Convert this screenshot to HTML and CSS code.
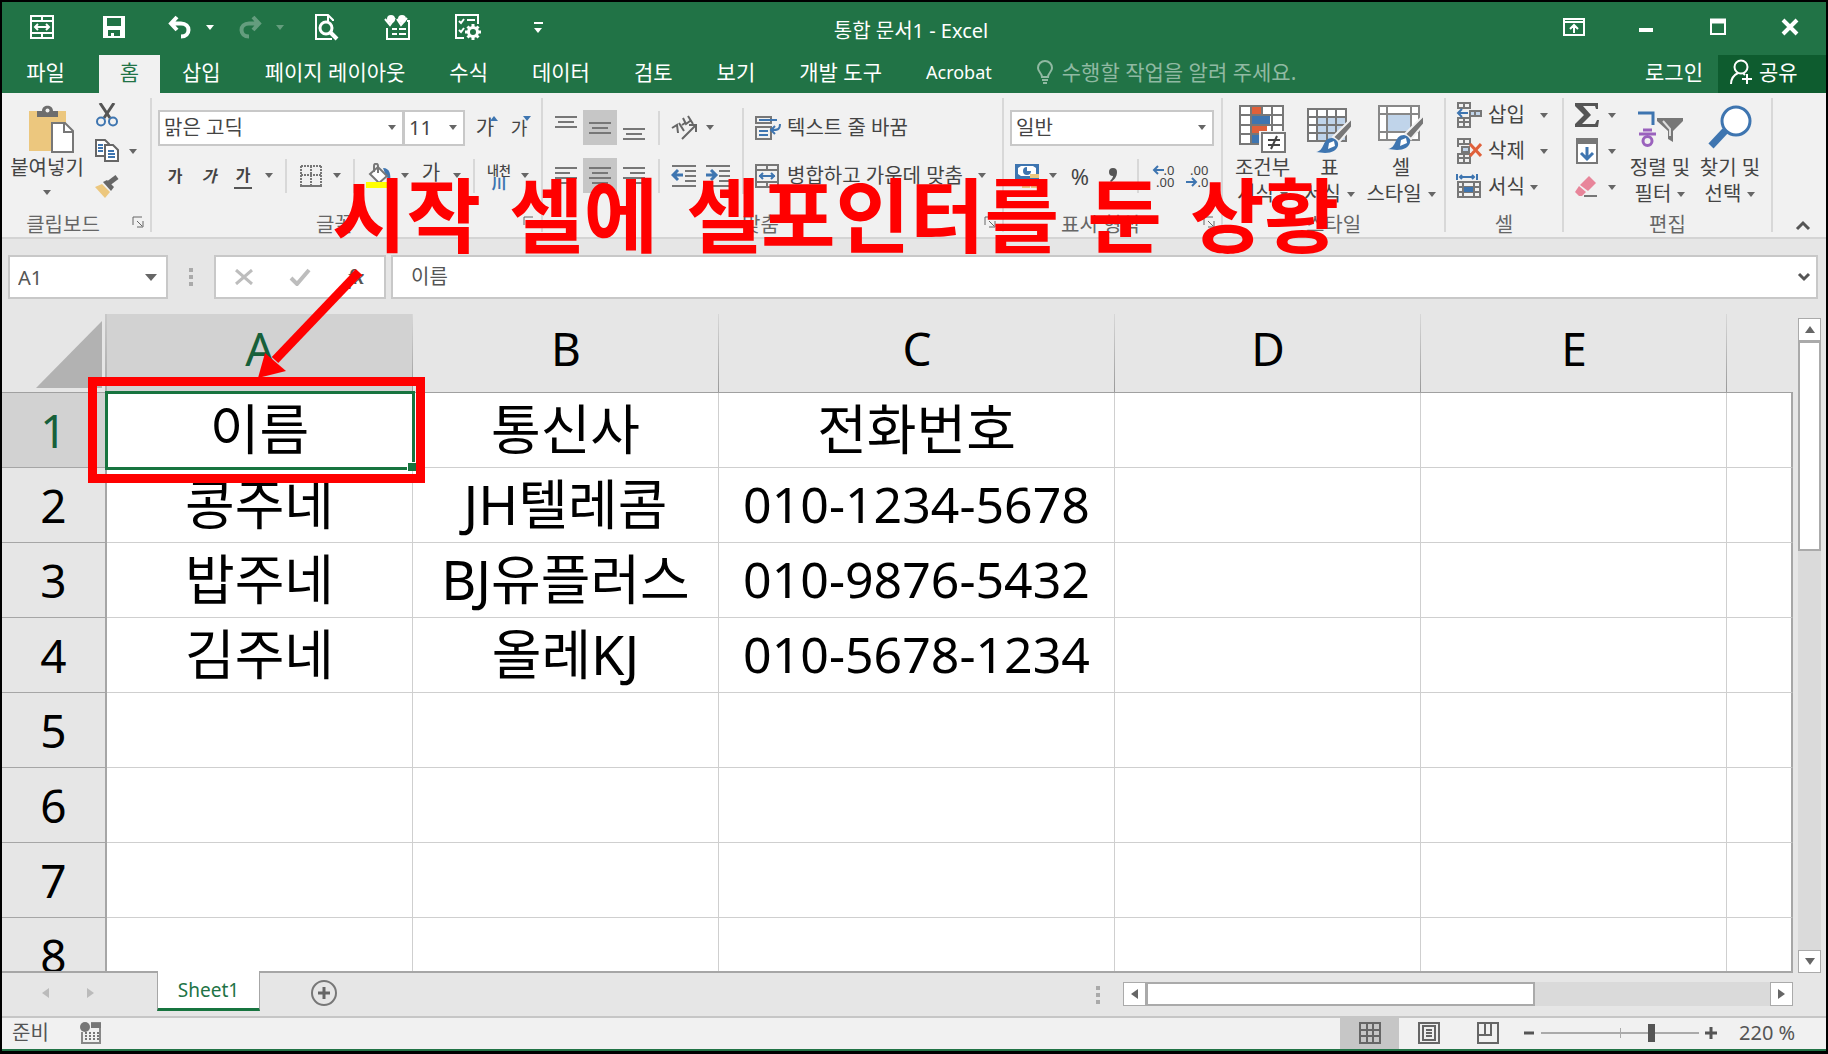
FILE: index.html
```html
<!DOCTYPE html>
<html lang="ko">
<head>
<meta charset="utf-8">
<title>통합 문서1 - Excel</title>
<link rel="stylesheet" href="styles.css">
</head>
<body>
<div class="window">
  <header class="titlebar">
    <div class="quick">
      <button class="q q-merge" aria-label="병합"><svg width="26" height="26" viewBox="0 0 26 26" fill="none" stroke="#fff" stroke-width="2"><path d="M2 2h22v22H2zM2 7h22M2 19h22M13 2v5M13 19v5M6 13h14M9 10l-3 3 3 3M17 10l3 3-3 3"/></svg></button>
      <button class="q q-save" aria-label="저장"><svg width="24" height="24" viewBox="0 0 24 24" fill="#fff"><path fill-rule="evenodd" d="M1 1h22v22H1zM5 3v8h14V3zM6 15v6h3v-3h3v3h6v-6z"/></svg></button>
      <button class="q q-undo" aria-label="실행 취소"><svg width="24" height="24" viewBox="0 0 24 24" fill="none" stroke="#fff" stroke-width="4"><path d="M9 2L3 8.500l6 6.500M4 8.500h9c10 0 10 13 0 13"/></svg></button>
      <button class="q q-drop" aria-label="실행 취소 목록"><i class="caret"></i></button>
      <button class="q q-undo dim" aria-label="다시 실행"><svg width="24" height="24" viewBox="0 0 24 24" fill="none" stroke="#fff" stroke-width="4"><path d="M15 2l6 6.500-6 6.500M20 8.500h-9c-10 0-10 13 0 13"/></svg></button>
      <button class="q q-drop dim" aria-label="다시 실행 목록"><i class="caret"></i></button>
      <button class="q q-wide" aria-label="인쇄 미리 보기"><svg width="26" height="28" viewBox="0 0 26 28" fill="none" stroke="#fff" stroke-width="2"><path d="M20 8v-1l-5-5H3v24h16M15 2v6"/><circle cx="13" cy="15" r="6" stroke-width="3"/><path d="M17 19l7 7" stroke-width="4"/></svg></button>
      <button class="q q-wide" aria-label="일정"><svg width="28" height="26" viewBox="0 0 28 26" fill="none" stroke="#fff" stroke-width="2"><path d="M24 7h2v18H4V14M9 15h5M16 15h7M9 20h5M16 20h7"/><circle cx="8" cy="5" r="4" fill="#fff" stroke="none"/><circle cx="19" cy="5" r="4" fill="#fff" stroke="none"/><path d="M2 5l5 6 5-7M14 5l4 6 6-7"/></svg></button>
      <button class="q q-wide" aria-label="양식"><svg width="28" height="28" viewBox="0 0 28 28" fill="none" stroke="#fff" stroke-width="2"><path d="M24 11V2H2v23h8M5 8l2 2 3-4M13 7h8M5 17l2 2 3-4"/><circle cx="19" cy="19" r="4.500" stroke-width="3"/><path d="M19 11v4M19 23v4M11 19h4M23 19h4M13.500 13.500l2 2M22.500 22.500l2 2M24.500 13.500l-2 2M15.500 22.500l-2 2" stroke-width="3"/></svg></button>
      <button class="q q-more" aria-label="빠른 실행 도구 모음 사용자 지정"><i class="bar"></i><i class="caret"></i></button>
    </div>
    <h1>통합 문서1 - Excel</h1>
    <div class="controls">
      <button aria-label="리본 메뉴 표시 옵션"><svg width="22" height="18" viewBox="0 0 22 18" fill="none" stroke="#fff" stroke-width="2"><path d="M1 1h20v16H1zM1 4h20M11 15V8M7 11l4-4 4 4"/></svg></button>
      <button aria-label="최소화"><svg width="16" height="18" viewBox="0 0 16 18"><path d="M1 12h14" stroke="#fff" stroke-width="4"/></svg></button>
      <button aria-label="최대화"><svg width="16" height="18" viewBox="0 0 16 18" fill="none" stroke="#fff"><path d="M1 1v15h14V1" stroke-width="2"/><path d="M0 3h16" stroke-width="5"/></svg></button>
      <button aria-label="닫기"><svg width="18" height="18" viewBox="0 0 18 18"><path d="M2 2l14 14M16 2L2 16" stroke="#fff" stroke-width="4"/></svg></button>
    </div>
  </header>

  <nav class="tabs">
    <button class="tab file">파일</button>
    <button class="tab active">홈</button>
    <button class="tab">삽입</button>
    <button class="tab">페이지 레이아웃</button>
    <button class="tab">수식</button>
    <button class="tab">데이터</button>
    <button class="tab">검토</button>
    <button class="tab">보기</button>
    <button class="tab">개발 도구</button>
    <button class="tab latin">Acrobat</button>
    <button class="tab tell"><svg width="18" height="24" viewBox="0 0 18 24" fill="none" stroke="currentColor" stroke-width="2"><path d="M6 17c0-4-4-5-4-9a7 7 0 0 1 14 0c0 4-4 5-4 9zM6 20h6M7 23h4"/></svg>수행할 작업을 알려 주세요.</button>
    <button class="tab login">로그인</button>
    <button class="tab share"><svg width="24" height="26" viewBox="0 0 24 26" fill="none" stroke="#fff" stroke-width="2"><circle cx="12" cy="8" r="6.500"/><path d="M2 25c0-6 3-9 7-11M14 14l2 2M18 15v10M13 20h10"/></svg>공유</button>
  </nav>

  <section class="ribbon">
    <div class="group g-clip">
      <div class="body">
        <button class="big"><svg width="46" height="48" viewBox="0 0 46 48"><path d="M1 6h37v40H1z" fill="#ecc77e"/><path d="M9 12V6h5c0-7 11-7 11 0h5v6z" fill="#6d6d6d"/><circle cx="19.500" cy="5.500" r="2" fill="#f1f1f1"/><path d="M24 18h13l8 8v21H24z" fill="#fff" stroke="#777" stroke-width="2"/><path d="M36 18v9h9" fill="none" stroke="#777" stroke-width="2"/></svg><span>붙여넣기</span><i class="caret low"></i></button>
        <div class="stack">
          <div class="row"><button class="tool" aria-label="잘라내기"><svg width="24" height="24" viewBox="0 0 24 24" fill="none"><path d="M5 0l10 15M19 0L9 15" stroke="#555" stroke-width="3"/><circle cx="6" cy="18.500" r="4" stroke="#3e75b0" stroke-width="2"/><circle cx="18" cy="18.500" r="4" stroke="#3e75b0" stroke-width="2"/></svg></button></div>
          <div class="row"><button class="tool" aria-label="복사"><svg width="26" height="24" viewBox="0 0 26 24" fill="#fff" stroke="#666" stroke-width="2"><path d="M2 1h9l4 4v12H2z"/><path d="M11 6h8l5 5v11H11z"/><path d="M4 6h5M4 9h5M4 12h5M14 12h6M14 15h7M14 18h7" stroke="#3e75b0"/></svg></button><button class="drop" aria-label="복사 옵션"><i class="caret"></i></button></div>
          <div class="row"><button class="tool" aria-label="서식 복사"><svg width="26" height="24" viewBox="0 0 26 24"><path d="M1 12l7-3 8 8-5 6z" fill="#ecc77e"/><path d="M9 7l4-2 7 7-3 4z" fill="#666"/><path d="M15 8l8-6" stroke="#666" stroke-width="5"/></svg></button></div>
        </div>
      </div>
      <footer><span>클립보드</span><button class="launch" aria-label="클립보드 옵션"><svg width="12" height="12" viewBox="0 0 12 12" fill="none" stroke="#666"><path d="M1 9V1h9M5 5l5 5M11 5v6H5"/></svg></button></footer>
    </div>

    <div class="group g-font">
      <div class="body rows">
        <div class="row">
          <label class="combo face"><select aria-label="글꼴"><option>맑은 고딕</option></select><i class="caret"></i></label>
          <label class="combo size"><select aria-label="글꼴 크기"><option>11</option></select><i class="caret"></i></label>
          <button class="tool glyph grow" aria-label="글꼴 크기 크게">가<i class="up"></i></button>
          <button class="tool glyph shrink" aria-label="글꼴 크기 작게">가<i class="down"></i></button>
        </div>
        <div class="row">
          <button class="tool fmt">가</button>
          <button class="tool fmt it">가</button>
          <button class="tool fmt un">가</button>
          <button class="drop" aria-label="밑줄 옵션"><i class="caret"></i></button>
          <i class="div"></i>
          <button class="tool" aria-label="테두리"><svg width="22" height="22" viewBox="0 0 22 22" fill="none" stroke="#777" stroke-width="2"><path d="M1 1h20M1 10h20M1 1v19M11 1v19M21 1v19" stroke-dasharray="2 1"/><path d="M0 21h22"/></svg></button>
          <button class="drop" aria-label="테두리 옵션"><i class="caret"></i></button>
          <i class="div"></i>
          <button class="tool" aria-label="채우기 색"><svg width="26" height="26" viewBox="0 0 26 26"><path d="M17 5c7 0 8 7 7 13l-4-5z" fill="#3e75b0"/><path d="M4 11l8-7 9 9-8 7z" fill="#fff" stroke="#777" stroke-width="2"/><path d="M8 9V3c0-3 4-3 4 0v7" fill="none" stroke="#777" stroke-width="2"/><path d="M0 19h25v6H0z" fill="#ff0"/></svg></button>
          <button class="drop" aria-label="채우기 옵션"><i class="caret"></i></button>
          <button class="tool glyph color">가</button>
          <button class="drop" aria-label="글꼴 색 옵션"><i class="caret"></i></button>
          <i class="div"></i>
          <button class="tool ruby"><span>내천</span><b>川</b></button>
          <button class="drop" aria-label="윗주 옵션"><i class="caret"></i></button>
        </div>
      </div>
      <footer><span>글꼴</span><button class="launch" aria-label="글꼴 옵션"><svg width="12" height="12" viewBox="0 0 12 12" fill="none" stroke="#666"><path d="M1 9V1h9M5 5l5 5M11 5v6H5"/></svg></button></footer>
    </div>

    <div class="group g-align">
      <div class="body">
        <div class="rows">
          <div class="row">
            <button class="tool" aria-label="위쪽 맞춤"><svg width="22" height="28" viewBox="0 0 22 28" stroke="#777" stroke-width="2"><path d="M0 3h22M3 8h16M0 13h22"/></svg></button>
            <button class="tool on" aria-label="가운데 맞춤"><svg width="22" height="28" viewBox="0 0 22 28" stroke="#777" stroke-width="2"><path d="M0 9h22M3 14h16M0 19h22"/></svg></button>
            <button class="tool" aria-label="아래쪽 맞춤"><svg width="22" height="28" viewBox="0 0 22 28" stroke="#777" stroke-width="2"><path d="M0 15h22M3 20h16M0 25h22"/></svg></button>
            <i class="div"></i>
            <button class="tool" aria-label="방향"><svg width="26" height="26" viewBox="0 0 26 26" fill="none" stroke="#666" stroke-width="2"><path d="M11 24L25 10M18 10h7v7M1 13l5-3 1 8M8 8l5 8M11 10l3-2M12 3l3 6 4-3M17 1l5 8"/></svg></button>
            <button class="drop" aria-label="방향 옵션"><i class="caret"></i></button>
          </div>
          <div class="row">
            <button class="tool" aria-label="왼쪽 맞춤"><svg width="22" height="24" viewBox="0 0 22 24" stroke="#777" stroke-width="2"><path d="M0 4h22M0 9h15M0 14h22M0 19h15"/></svg></button>
            <button class="tool on" aria-label="가로 가운데 맞춤"><svg width="22" height="24" viewBox="0 0 22 24" stroke="#777" stroke-width="2"><path d="M0 4h22M3 9h16M0 14h22M3 19h16"/></svg></button>
            <button class="tool" aria-label="오른쪽 맞춤"><svg width="22" height="24" viewBox="0 0 22 24" stroke="#777" stroke-width="2"><path d="M0 4h22M7 9h15M0 14h22M7 19h15"/></svg></button>
            <i class="div"></i>
            <button class="tool" aria-label="내어쓰기"><svg width="26" height="24" viewBox="0 0 26 24" stroke="#777" stroke-width="2"><path d="M1 2h24M14 7h11M14 12h11M14 17h11M1 22h24"/><path d="M12 11H3M7 6l-5 5 5 5" fill="none" stroke="#3e75b0" stroke-width="3"/></svg></button>
            <button class="tool" aria-label="들여쓰기"><svg width="26" height="24" viewBox="0 0 26 24" stroke="#777" stroke-width="2"><path d="M1 2h24M14 7h11M14 12h11M14 17h11M1 22h24"/><path d="M1 11h9M6 6l5 5-5 5" fill="none" stroke="#3e75b0" stroke-width="3"/></svg></button>
          </div>
        </div>
        <i class="div tall"></i>
        <div class="rows">
          <div class="row">
            <button class="wide"><svg width="26" height="24" viewBox="0 0 26 24" fill="none" stroke="#777" stroke-width="2"><path d="M1 1h15v6H1zM1 11h15v12H1z"/><path d="M4 4h18M4 15h9M4 19h9M25 8c0 6-3 6-8 6M20 10l-4 4 4 4" stroke="#3e75b0"/></svg>텍스트 줄 바꿈</button>
          </div>
          <div class="row">
            <button class="wide"><svg width="26" height="24" viewBox="0 0 26 24" fill="none" stroke="#777" stroke-width="2"><path d="M1 1h22v22H1zM1 6h22M1 18h22M12 1v5M12 18v5"/><path d="M4 12h16M8 9l-3 3 3 3M16 9l3 3-3 3" stroke="#3e75b0"/></svg>병합하고 가운데 맞춤</button><button class="drop far" aria-label="병합 옵션"><i class="caret"></i></button>
          </div>
        </div>
      </div>
      <footer><span>맞춤</span><button class="launch" aria-label="맞춤 옵션"><svg width="12" height="12" viewBox="0 0 12 12" fill="none" stroke="#666"><path d="M1 9V1h9M5 5l5 5M11 5v6H5"/></svg></button></footer>
    </div>

    <div class="group g-number">
      <div class="body rows">
        <div class="row"><label class="combo kind"><select aria-label="표시 형식"><option>일반</option></select><i class="caret"></i></label></div>
        <div class="row">
          <button class="tool" aria-label="회계 표시 형식"><svg width="26" height="26" viewBox="0 0 26 26"><path d="M1 1h24v15H1z" fill="#3e75b0"/><path d="M4 5l3-2h12l3 2v6l-3 2H7l-3-2z" fill="#fff"/><path d="M17 8a4 4 0 1 1-4-4v4z" fill="#3e75b0"/><path d="M16 11h9v4h-9zM15 16h9v4h-9zM8 20h8v5H8zM17 21h8v4h-8z" fill="#ecc77e"/></svg></button>
          <button class="drop" aria-label="회계 옵션"><i class="caret"></i></button>
          <button class="tool pct">%</button>
          <button class="tool comma" aria-label="쉼표 스타일"><svg width="10" height="16" viewBox="0 0 10 16"><path d="M5 1a4 4 0 0 1 4 4c0 5-3 8-6 10l-1-1c2-2 3-4 3-5a4 4 0 0 1 0-8z" fill="#555"/></svg></button>
          <i class="div"></i>
          <button class="tool dec" aria-label="자릿수 늘림"><span><svg width="12" height="10" viewBox="0 0 12 10" fill="none" stroke="#3e75b0" stroke-width="2"><path d="M12 5H2M6 1L2 5l4 4"/></svg>.0</span><span>.00</span></button>
          <button class="tool dec" aria-label="자릿수 줄임"><span>.00</span><span><svg width="12" height="10" viewBox="0 0 12 10" fill="none" stroke="#3e75b0" stroke-width="2"><path d="M0 5h10M6 1l4 4-4 4"/></svg>.0</span></button>
        </div>
      </div>
      <footer><span>표시 형식</span><button class="launch" aria-label="표시 형식 옵션"><svg width="12" height="12" viewBox="0 0 12 12" fill="none" stroke="#666"><path d="M1 9V1h9M5 5l5 5M11 5v6H5"/></svg></button></footer>
    </div>

    <div class="group g-style">
      <div class="body">
        <button class="big"><svg width="48" height="48" viewBox="0 0 48 48"><path d="M1 1h43v38H1z" fill="#fff"/><path d="M13 1h10v9H13zM13 20h15v9H13z" fill="#e0603a"/><path d="M13 11h18v9H13zM13 30h9v9h-9z" fill="#3e75b0"/><path d="M1 1h43v38H1zM1 10h43M1 20h43M1 29h43M12 1v38M23 1v10M33 1v38" fill="none" stroke="#777" stroke-width="2"/><path d="M20 26h28v22H20z" fill="#f1f1f1"/><path d="M23 28h23v19H23z" fill="#fff" stroke="#777" stroke-width="2"/><path d="M29 35h12M29 40h12M38 31l-6 13" stroke="#444" stroke-width="2"/></svg><span>조건부</span><span>서식<i class="caret"></i></span></button>
        <button class="big"><svg width="48" height="48" viewBox="0 0 48 48"><path d="M2 4h38v32H2z" fill="#fff"/><path d="M11 13h29v23H11z" fill="#c0d4ea"/><path d="M2 4h38v32H2zM2 12h38M2 20h38M2 28h38M11 4v32M21 4v32M30 4v32" fill="none" stroke="#777" stroke-width="2"/><path d="M46 13v9L33 37l-6-5z" fill="#777" stroke="#f1f1f1" stroke-width="2"/><path d="M10 47c9-1 6-14 16-14 10 2 8 15-7 15z" fill="#3e75b0"/><path d="M22 44l7-3-1-5-5 2z" fill="#fff"/></svg><span>표</span><span>서식<i class="caret"></i></span></button>
        <button class="big last"><svg width="48" height="48" viewBox="0 0 48 48"><path d="M2 1h40v34H2z" fill="#fff"/><path d="M2 1h40v34H2zM2 9h40M2 27h40M10 1v34M34 1v34" fill="none" stroke="#888" stroke-width="2"/><path d="M11 10h22v16H11z" fill="#c0d4ea"/><path d="M47 10v9L34 34l-6-5z" fill="#777" stroke="#f1f1f1" stroke-width="2"/><path d="M11 44c9-1 6-14 16-14 10 2 8 15-7 15z" fill="#3e75b0"/><path d="M23 41l7-3-1-5-5 2z" fill="#fff"/></svg><span>셀</span><span>스타일<i class="caret"></i></span></button>
      </div>
      <footer><span>스타일</span></footer>
    </div>

    <div class="group g-cell">
      <div class="body stack">
        <div class="row"><button class="wide"><svg width="26" height="26" viewBox="0 0 26 26" fill="none" stroke="#777" stroke-width="2"><path d="M2 1h12v5H2zM8 1v5M2 16h12v9H2zM8 16v9M2 20h12"/><path d="M14 9h11v5H14z" fill="#c0d4ea"/><path d="M19 9v5"/><path d="M12 11H2M6 7l-4 4 4 4" stroke="#3e75b0"/></svg>삽입</button><button class="drop far" aria-label="삽입 옵션"><i class="caret"></i></button></div>
        <div class="row"><button class="wide"><svg width="26" height="26" viewBox="0 0 26 26" fill="none" stroke="#777" stroke-width="2"><path d="M2 1h12v5H2zM8 1v5M2 16h12v9H2zM8 16v9M2 20h12M2 6v3"/><path d="M6 9h7v5H6z" fill="#c0d4ea"/><path d="M14 6l11 12M25 6L14 18" stroke="#e0603a" stroke-width="3"/></svg>삭제</button><button class="drop far" aria-label="삭제 옵션"><i class="caret"></i></button></div>
        <div class="row"><button class="wide"><svg width="26" height="26" viewBox="0 0 26 26" fill="none" stroke="#777" stroke-width="2"><path d="M2 8h22v15H2zM2 13h22M2 18h22M7 8v15M18 8v15"/><path d="M8 13h9v5H8z" fill="#3e75b0" stroke="none"/><path d="M1 0v6M21 0v6M4 3h14M6 1L4 3l2 2M16 1l2 2-2 2" stroke="#3e75b0"/></svg>서식</button><button class="drop" aria-label="서식 옵션"><i class="caret"></i></button></div>
      </div>
      <footer><span>셀</span></footer>
    </div>

    <div class="group g-edit">
      <div class="body">
        <div class="stack">
          <div class="row"><button class="tool" aria-label="자동 합계"><svg width="24" height="24" viewBox="0 0 24 24"><path d="M0 0h23v6h-2l-1-3H8l8 9-9 9h13l2-4h2l-1 7H0v-3l9-9-9-9z" fill="#555"/></svg></button><button class="drop" aria-label="합계 옵션"><i class="caret"></i></button></div>
          <div class="row"><button class="tool" aria-label="채우기"><svg width="22" height="26" viewBox="0 0 22 26"><path d="M1 1h20v24H1z" fill="#fff" stroke="#777" stroke-width="2"/><path d="M0 0h22v6H0z" fill="#777"/><path d="M11 9v11M5 15l6 6 6-6" fill="none" stroke="#3e75b0" stroke-width="3"/></svg></button><button class="drop" aria-label="채우기 옵션"><i class="caret"></i></button></div>
          <div class="row"><button class="tool" aria-label="지우기"><svg width="24" height="22" viewBox="0 0 24 22"><path d="M14 0l7 7-8 8-8-6z" fill="#e8859a"/><path d="M4 10l7 6-4 4H4l-4-4z" fill="#e8859a"/><path d="M9 20h13" stroke="#777" stroke-width="2"/></svg></button><button class="drop" aria-label="지우기 옵션"><i class="caret"></i></button></div>
        </div>
        <button class="big"><svg width="48" height="48" viewBox="0 0 48 48" fill="none"><path d="M2 8h15v12" stroke="#3e75b0" stroke-width="3"/><path d="M7 25h9M3 29h17" stroke="#9a62bd" stroke-width="3"/><circle cx="11.500" cy="36" r="4.500" stroke="#9a62bd" stroke-width="3"/><path d="M21 13h26v3L37 26v11l-5-3v-8L21 16z" fill="#777"/><path d="M27 16l7 8v7" stroke="#ddd" stroke-width="2"/></svg><span>정렬 및</span><span>필터<i class="caret"></i></span></button>
        <button class="big"><svg width="48" height="48" viewBox="0 0 48 48" fill="none" stroke="#3e75b0"><path d="M19 26L5 41" stroke-width="7"/><circle cx="30" cy="16" r="14" fill="#fff" stroke-width="3"/></svg><span>찾기 및</span><span>선택<i class="caret"></i></span></button>
      </div>
      <footer><span>편집</span></footer>
    </div>
    <button class="collapse" aria-label="리본 메뉴 축소"><svg width="16" height="12" viewBox="0 0 16 12" fill="none" stroke="#555" stroke-width="3"><path d="M2 10l6-6 6 6"/></svg></button>
  </section>

  <section class="formula">
    <label class="combo name"><input value="A1" aria-label="이름 상자"><i class="caret lg"></i></label>
    <i class="dots"></i>
    <div class="fx">
      <button aria-label="취소"><svg width="18" height="16" viewBox="0 0 18 16"><path d="M1 1l16 14M17 1L1 15" stroke="#bdbdbd" stroke-width="3"/></svg></button>
      <button aria-label="입력"><svg width="22" height="18" viewBox="0 0 22 18" fill="none"><path d="M2 10l6 6L20 2" stroke="#bdbdbd" stroke-width="4"/></svg></button>
      <button class="fn" aria-label="함수 삽입">fx</button>
    </div>
    <label class="combo entry"><input value="이름" aria-label="수식 입력줄"><svg width="16" height="12" viewBox="0 0 16 12" fill="none" stroke="#555" stroke-width="3"><path d="M3 3l5 5 5-5"/></svg></label>
  </section>

  <main class="sheet">
    <div class="grid">
      <table>
        <colgroup><col class="c-head"><col class="c-std"><col class="c-std"><col class="c-big"><col class="c-std"><col class="c-std"><col></colgroup>
        <thead>
          <tr><th class="corner"><svg width="66" height="67" viewBox="0 0 66 67"><path d="M66 0v67H0z" fill="#b2b2b2"/></svg></th><th class="sel" scope="col">A</th><th scope="col">B</th><th scope="col">C</th><th scope="col">D</th><th scope="col">E</th><th></th></tr>
        </thead>
        <tbody>
          <tr><th class="sel" scope="row">1</th><td class="cursor">이름<i class="handle"></i></td><td>통신사</td><td>전화번호</td><td></td><td></td><td></td></tr>
          <tr><th scope="row">2</th><td>콩주네</td><td>JH텔레콤</td><td class="num">010-1234-5678</td><td></td><td></td><td></td></tr>
          <tr><th scope="row">3</th><td>밥주네</td><td>BJ유플러스</td><td class="num">010-9876-5432</td><td></td><td></td><td></td></tr>
          <tr><th scope="row">4</th><td>김주네</td><td>올레KJ</td><td class="num">010-5678-1234</td><td></td><td></td><td></td></tr>
          <tr><th scope="row">5</th><td></td><td></td><td></td><td></td><td></td><td></td></tr>
          <tr><th scope="row">6</th><td></td><td></td><td></td><td></td><td></td><td></td></tr>
          <tr><th scope="row">7</th><td></td><td></td><td></td><td></td><td></td><td></td></tr>
          <tr><th scope="row">8</th><td></td><td></td><td></td><td></td><td></td><td></td></tr>
        </tbody>
      </table>
    </div>
    <div class="vscroll">
      <button aria-label="위로"><i class="tri up"></i></button>
      <div class="thumb"></div>
      <button aria-label="아래로"><i class="tri down"></i></button>
    </div>
  </main>

  <section class="sheets">
    <div class="arrows"><i class="tri left pale"></i><i class="tri right pale"></i></div>
    <button class="sheet-tab">Sheet1</button>
    <button class="add" aria-label="새 시트"><svg width="26" height="26" viewBox="0 0 26 26" fill="none" stroke="#777"><circle cx="13" cy="13" r="12" stroke-width="2"/><path d="M7 13h12M13 7v12" stroke="#666" stroke-width="3"/></svg></button>
    <i class="dots"></i>
    <div class="hscroll">
      <button aria-label="왼쪽으로"><i class="tri left"></i></button>
      <div class="thumb"></div>
      <button aria-label="오른쪽으로"><i class="tri right"></i></button>
    </div>
  </section>

  <footer class="status">
    <span>준비</span>
    <button class="macro" aria-label="매크로 기록"><svg width="22" height="22" viewBox="0 0 22 22" fill="none"><path d="M2 10v11h18V1h-9" stroke="#888" stroke-width="2"/><path d="M11 1h10v5H11z" fill="#777"/><circle cx="5" cy="5" r="5" fill="#777"/><path d="M5 11h14M5 14h14M5 17h14" stroke="#777" stroke-width="2" stroke-dasharray="2 2"/></svg></button>
    <div class="views">
      <button class="on" aria-label="기본"><svg width="22" height="22" viewBox="0 0 22 22" fill="none" stroke="#666" stroke-width="2"><path d="M1 1h20v20H1zM1 8h20M1 14h20M8 1v20M14 1v20"/></svg></button>
      <button aria-label="페이지 레이아웃"><svg width="22" height="22" viewBox="0 0 22 22" fill="none" stroke="#666" stroke-width="2"><path d="M1 1h20v20H1zM5 4h12v14H5z"/><path d="M8 8h6M8 11h6M8 14h6"/></svg></button>
      <button aria-label="페이지 나누기 미리 보기"><svg width="22" height="22" viewBox="0 0 22 22" fill="none" stroke="#666" stroke-width="2"><path d="M1 1h20v20H1zM1 13h13V1M8 1v12"/></svg></button>
    </div>
    <button class="step" aria-label="축소"><svg width="12" height="12" viewBox="0 0 12 12"><path d="M1 6h10" stroke="#555" stroke-width="3"/></svg></button>
    <input class="zoom" type="range" min="0" max="100" value="71" aria-label="확대/축소">
    <button class="step" aria-label="확대"><svg width="12" height="12" viewBox="0 0 12 12"><path d="M0 6h12M6 0v12" stroke="#555" stroke-width="3"/></svg></button>
    <output>220 %</output>
  </footer>
</div>

<div class="note">
  <svg class="arrow" width="110" height="120" viewBox="0 0 110 120"><path d="M107 4L23 92" stroke="#f00" stroke-width="9"/><path d="M6 110l7-25 21 18z" fill="#f00"/></svg>
  <div class="frame"></div>
  <p>시작 셀에 셀포인터를 둔 상황</p>
</div>
</body>
</html>
```
FILE: styles.css
```css
* { box-sizing: border-box; }
body {
  margin: 0;
  position: relative;
  background: #000;
  color: #444;
  font: 20px/24px "Noto Sans", "Noto Sans CJK KR", sans-serif;
}
button, input, select { font: inherit; color: inherit; }
button { border: 0; background: none; padding: 0; margin: 0; white-space: nowrap; }
svg { display: block; flex: none; }
.window {
  height: 100vh;
  min-height: 600px;
  display: flex;
  flex-direction: column;
  border: 2px solid #000;
  border-bottom-width: 3px;
  background: #e6e6e6;
  overflow: hidden;
}
.caret {
  display: inline-block;
  border: 4px solid transparent;
  border-top: 5px solid #666;
  border-bottom: 0;
  flex: none;
}
.q .caret { border-top-color: #fff; }
.caret.lg { border-width: 7px 6px 0; }

/* Title bar */
.titlebar {
  display: grid;
  grid-template-columns: 1fr auto 1fr;
  align-items: start;
  height: 53px;
  background: #217346;
  color: #fff;
}
.titlebar h1 { margin: 17px 6px 0 0; font-size: 20px; font-weight: 400; line-height: 24px; }
.quick { display: flex; padding-left: 4px; }
.q { display: grid; place-content: center; justify-items: center; height: 50px; width: 72px; }
.q-undo { width: 50px; margin-left: 5px; }
.q-drop { width: 20px; margin-left: -5px; }
.q-wide { width: 71px; }
.dim { opacity: .3; }
.q-more { width: 70px; gap: 4px; }
.bar { width: 9px; height: 2px; background: #fff; }
.controls { display: flex; justify-content: flex-end; }
.controls button { width: 72px; height: 50px; display: grid; place-content: center; }

/* Ribbon tabs */
.tabs { display: flex; height: 38px; background: #217346; color: #fff; flex: none; }
.tab {
  display: flex;
  align-items: center;
  justify-content: center;
  padding: 0 22px 4px;
  font-size: 21px;
}
.tab.file { width: 97px; padding-right: 32px; }
.tab.active { width: 61px; background: #f1f1f1; color: #217346; }
.tab.latin { font-size: 18px; }
.tab.tell { gap: 8px; color: #90b9a2; }
.tab.login { margin-left: auto; padding-right: 15px; }
.tab.share { width: 108px; background: #0e5c2f; justify-content: flex-start; padding-left: 11px; gap: 6px; }

/* Ribbon */
.ribbon {
  display: flex;
  height: 146px;
  padding-top: 5px;
  background: #f1f1f1;
  border-bottom: 2px solid #d4d4d4;
  flex: none;
}
.group {
  display: flex;
  flex-direction: column;
  height: 134px;
  border-right: 2px solid #d8d8d8;
  padding-left: 6px;
  flex: none;
}
.body { display: flex; height: 112px; flex: none; }
.body.rows, .rows { display: flex; flex-direction: column; gap: 13px; padding-top: 12px; }
.body.stack, .stack { display: flex; flex-direction: column; gap: 2px; }
.row { display: flex; align-items: center; height: 35px; }
.stack > .row { height: 34px; }
.group footer { display: flex; color: #666; height: 22px; align-items: center; margin-left: -6px; }
.group footer span { flex: 1; text-align: center; padding-top: 8px; }
.launch { width: 24px; height: 20px; display: grid; place-content: end start; padding: 0 0 3px 6px; }
.g-clip { width: 150px; padding-left: 4px; }
.g-font { width: 391px; }
.g-align { width: 461px; }
.g-number { width: 219px; }
.g-style { width: 223px; }
.g-cell { width: 118px; }
.g-edit { width: 209px; }
.tool { width: 34px; height: 35px; display: grid; place-content: center; justify-items: center; flex: none; }
.tool.on { background: #c6c6c6; }
.drop { width: 18px; height: 34px; display: grid; place-content: center; flex: none; }
.drop.far { margin-left: 10px; }
.div { width: 16px; height: 34px; flex: none; background: linear-gradient(#d8d8d8, #d8d8d8) 7px 0 / 2px 100% no-repeat; }
.div.tall { height: 86px; margin-top: 10px; }
.wide { display: flex; align-items: center; gap: 6px; padding-left: 4px; }
.combo { display: grid; grid-template-columns: 1fr; align-items: center; background: #fff; border: 2px solid #c8c8c8; height: 36px; }
.combo > * { grid-area: 1 / 1; }
.combo > .caret, .combo > svg { justify-self: end; margin-right: 6px; }
.combo select, .combo input { appearance: none; border: 0; background: none; width: 100%; height: 100%; padding: 0 4px; outline: 0; }
.combo > .caret.lg { margin-right: 9px; }
.face { width: 246px; }
.size { width: 62px; margin-left: -1px; }
.kind { width: 204px; }
.glyph { grid-auto-flow: column; align-content: center; }
.grow { font-size: 20px; margin-left: 5px; }
.shrink { font-size: 18px; }
.glyph .up, .glyph .down { border: 4px solid transparent; height: 0; margin-left: -4px; }
.glyph .up { border-bottom: 5px solid #3e75b0; border-top: 0; }
.glyph .down { border-top: 5px solid #3e75b0; border-bottom: 0; }
.fmt { font-size: 16px; font-weight: 700; }
.it { font-style: italic; }
.un { align-content: center; }
.un::after { content: ""; width: 18px; height: 2px; background: #555; }
.color { grid-auto-flow: row; line-height: 20px; }
.color::after { content: ""; width: 25px; height: 6px; background: #f00; }
.ruby { line-height: 14px; font-size: 13px; font-weight: 500; }
.ruby b { color: #3e75b0; font-size: 15px; line-height: 12px; }
.pct { font-size: 22px; padding-left: 2px; }
.comma { padding-bottom: 2px; }
.dec { font-size: 13px; line-height: 12px; justify-items: end; }
.dec span { display: flex; align-items: center; }
.big { display: flex; flex-direction: column; align-items: center; width: 67px; padding-top: 7px; }
.big span { line-height: 26px; white-space: nowrap; display: flex; align-items: center; gap: 6px; }
.big svg { margin-bottom: 2px; }
.big.last { width: 76px; }
.g-clip .big { width: 82px; }
.g-clip .big svg { margin-left: 7px; }
.g-clip .stack { padding-left: 2px; }
.low { margin-top: 9px; }
.g-edit .big { width: 70px; }
.g-edit .stack { width: 55px; }
.g-edit .tool { width: 33px; }
.collapse { align-self: flex-end; margin: 0 0 6px auto; padding-right: 15px; }

/* Formula bar */
.formula { display: flex; padding: 16px 8px 16px 6px; height: 75px; flex: none; color: #555; }
.formula .combo, .fx { height: 44px; }
.name { width: 160px; }
.name input { padding: 0 8px; }
.dots { width: 4px; height: 18px; align-self: center; margin: 0 21px; background: linear-gradient(#aaa 4px, transparent 4px) 0 0 / 4px 7px; }
.fx { width: 172px; display: flex; align-items: center; background: #fff; border: 2px solid #c8c8c8; }
.fx button { flex: 1; display: grid; place-content: center; }
.fn { font-style: italic; font-family: "Liberation Serif", serif; font-weight: 700; }
.entry { flex: 1; margin-left: 5px; }
.entry input { padding: 0 18px 4px; }
.combo.entry > svg { margin-right: 4px; }

/* Worksheet */
.sheet { flex: 1; display: flex; min-height: 0; }
.grid { flex: 1; min-width: 0; overflow: hidden; border-bottom: 2px solid #a6a6a6; }
table { table-layout: fixed; width: 100%; border-collapse: separate; border-spacing: 0; color: #000; }
.c-head { width: 105px; }
.c-std { width: 306px; }
.c-big { width: 396px; }
th { font-size: 46px; font-weight: 400; line-height: 56px; padding: 0; }
thead th { height: 79px; padding-bottom: 10px; border-bottom: 1px solid #a0a0a0; background: linear-gradient(#d8d8d8, #999) right / 1px 100% no-repeat #e6e6e6; }
thead th:last-child { background: #e6e6e6; }
thead .sel { background-color: #d2d2d2; color: #17603a; }
thead .corner { padding: 0 5px 4px 0; vertical-align: bottom; background: linear-gradient(#c8c8c8, #aaa) right / 2px 100% no-repeat #e6e6e6; }
.corner svg { margin-left: auto; }
tbody th { height: 75px; background: #e6e6e6; border-right: 2px solid #a6a6a6; border-bottom: 1px solid #a6a6a6; }
tbody .sel { background: #d2d2d2; color: #17603a; }
td { background: #fff; height: 75px; padding: 0 0 2px; text-align: center; font-size: 54px; line-height: 60px; border-right: 1px solid #cfcfcf; border-bottom: 1px solid #cfcfcf; white-space: nowrap; }
td:last-child { border-right: 2px solid #a6a6a6; }
.num { font-size: 50px; }
.cursor { position: relative; outline: 3px solid #17743f; outline-offset: -1px; }
.handle { position: absolute; right: -4px; bottom: -4px; width: 9px; height: 9px; background: #17743f; border: solid #fff; border-width: 1px 0 0 1px; }

/* Scroll bars */
.tri { border: 5px solid transparent; width: 0; height: 0; }
.tri.up { border-bottom: 7px solid #666; border-top: 0; }
.tri.down { border-top: 7px solid #666; border-bottom: 0; }
.tri.left { border-right: 7px solid #666; border-left: 0; }
.tri.right { border-left: 7px solid #666; border-right: 0; }
.tri.pale { border-left-color: #bbb; border-right-color: #bbb; border-top-color: transparent; border-bottom-color: transparent; }
.tri.left.pale { border-left-color: transparent; }
.tri.right.pale { border-right-color: transparent; }
.vscroll { width: 23px; margin: 4px 5px 0; display: flex; flex-direction: column; background: #dadada; }
.vscroll button, .hscroll button { display: grid; place-content: center; width: 23px; height: 23px; background: #fff; border: 1px solid #aaa; flex: none; }
.thumb { background: #fff; border: 2px solid #aaa; }
.vscroll .thumb { height: 32%; }
.vscroll button:last-child { margin-top: auto; }
.sheets { display: flex; height: 43px; flex: none; padding-right: 33px; }
.arrows { display: flex; width: 155px; padding: 0 0 3px 40px; gap: 38px; align-items: center; }
.sheet-tab { width: 103px; height: 40px; margin-top: -2px; background: #fff; color: #217346; font-size: 19px; border: solid #a6a6a6; border-width: 0 1px; border-bottom: 3px solid #17743f; }
.add { margin: 0 auto 3px 51px; }
.sheets .dots { margin-right: 23px; }
.hscroll { display: flex; width: 670px; height: 24px; margin-top: 9px; background: #dadada; }
.hscroll button { height: 24px; }
.hscroll .thumb { width: 58%; }
.hscroll button:last-child { margin-left: auto; }

/* Status bar */
.status { display: flex; align-items: center; height: 35px; flex: none; background: #f1f1f1; border-top: 2px solid #c6c6c6; border-bottom: 2px solid #217346; color: #555; padding: 0 31px 2px 10px; }
.macro { margin-left: 31px; }
.views { display: flex; margin: 0 0 -2px auto; align-self: stretch; }
.views button { width: 59px; display: grid; place-content: center; padding-bottom: 2px; }
.views .on { background: #c6c6c6; }
.step { margin: 0 6px; }
.zoom { appearance: none; width: 158px; height: 18px; margin: 0; background: linear-gradient(#aaa, #aaa) 79px 4px / 1px 10px no-repeat, linear-gradient(#aaa, #aaa) 0 8px / 100% 2px no-repeat; }
.zoom::-webkit-slider-thumb { appearance: none; width: 7px; height: 18px; background: #555; border-radius: 0; }
.status output { width: 56px; margin-left: 16px; white-space: nowrap; }

/* Red callout laid over the window */
.note p { position: absolute; left: 332px; top: 170px; margin: 0; color: #f00; font-family: "DejaVu Sans", "Noto Sans CJK KR", sans-serif; font-size: 81px; font-weight: 700; line-height: 96px; white-space: nowrap; }
.frame { position: absolute; left: 88px; top: 377px; width: 337px; height: 106px; border: 9px solid #f00; }
.arrow { position: absolute; left: 252px; top: 268px; }
```
